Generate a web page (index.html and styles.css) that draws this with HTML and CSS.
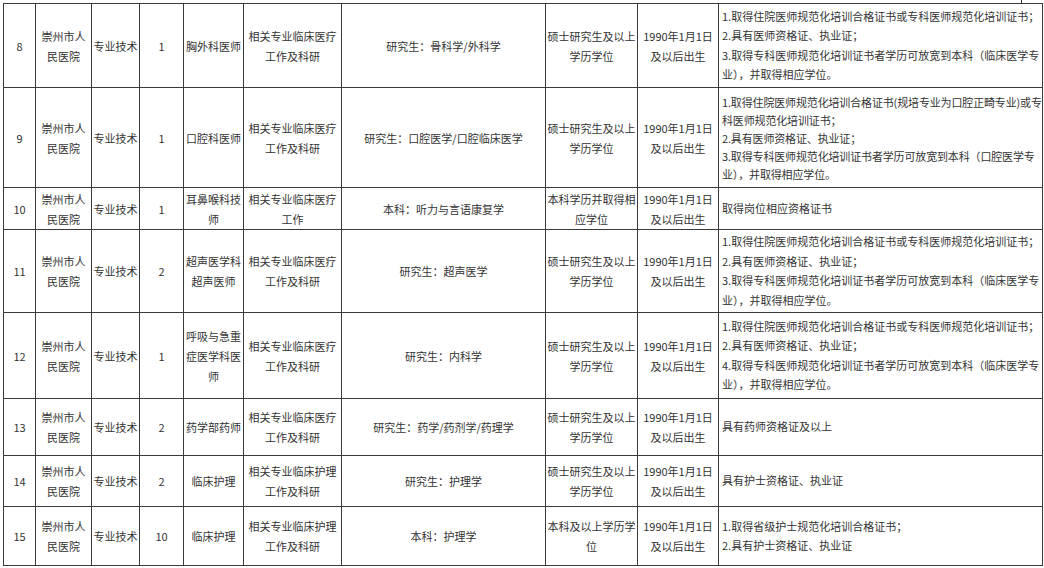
FILE: index.html
```html
<!DOCTYPE html>
<html lang="zh-CN">
<head>
<meta charset="utf-8">
<title>岗位表</title>
<link rel="stylesheet" href="styles.css">
</head>
<body>
<div class="sheet">
  <span class="tick"></span>
  <table class="jobs">
    <colgroup>
      <col class="c1"><col class="c2"><col class="c3"><col class="c4"><col class="c5">
      <col class="c6"><col class="c7"><col class="c8"><col class="c9"><col class="c10">
    </colgroup>
    <tbody>
      <tr class="r8">
        <td>8</td><td>崇州市人<br>民医院</td><td>专业技术</td><td>1</td><td>胸外科医师</td>
        <td>相关专业临床医疗<br>工作及科研</td><td>研究生：骨科学/外科学</td>
        <td>硕士研究生及以上<br>学历学位</td><td>1990年1月1日<br>及以后出生</td>
        <td class="req"><div>1.取得住院医师规范化培训合格证书或专科医师规范化培训证书；</div><div>2.具有医师资格证、执业证；</div><div>3.取得专科医师规范化培训证书者学历可放宽到本科（临床医学专</div><div>业），并取得相应学位。</div></td>
      </tr>
      <tr class="r9">
        <td>9</td><td>崇州市人<br>民医院</td><td>专业技术</td><td>1</td><td>口腔科医师</td>
        <td>相关专业临床医疗<br>工作及科研</td><td>研究生：口腔医学/口腔临床医学</td>
        <td>硕士研究生及以上<br>学历学位</td><td>1990年1月1日<br>及以后出生</td>
        <td class="req tight"><div>1.取得住院医师规范化培训合格证书(规培专业为口腔正畸专业)或专</div><div>科医师规范化培训证书；</div><div>2.具有医师资格证、执业证；</div><div>3.取得专科医师规范化培训证书者学历可放宽到本科（口腔医学专</div><div>业），并取得相应学位。</div></td>
      </tr>
      <tr class="r10">
        <td>10</td><td>崇州市人<br>民医院</td><td>专业技术</td><td>1</td><td>耳鼻喉科技<br>师</td>
        <td>相关专业临床医疗<br>工作</td><td>本科：听力与言语康复学</td>
        <td>本科学历并取得相<br>应学位</td><td>1990年1月1日<br>及以后出生</td>
        <td class="req"><div>取得岗位相应资格证书</div></td>
      </tr>
      <tr class="r11">
        <td>11</td><td>崇州市人<br>民医院</td><td>专业技术</td><td>2</td><td>超声医学科<br>超声医师</td>
        <td>相关专业临床医疗<br>工作及科研</td><td>研究生：超声医学</td>
        <td>硕士研究生及以上<br>学历学位</td><td>1990年1月1日<br>及以后出生</td>
        <td class="req"><div>1.取得住院医师规范化培训合格证书或专科医师规范化培训证书；</div><div>2.具有医师资格证、执业证；</div><div>3.取得专科医师规范化培训证书者学历可放宽到本科（临床医学专</div><div>业），并取得相应学位。</div></td>
      </tr>
      <tr class="r12">
        <td>12</td><td>崇州市人<br>民医院</td><td>专业技术</td><td>1</td><td>呼吸与急重<br>症医学科医<br>师</td>
        <td>相关专业临床医疗<br>工作及科研</td><td>研究生：内科学</td>
        <td>硕士研究生及以上<br>学历学位</td><td>1990年1月1日<br>及以后出生</td>
        <td class="req"><div>1.取得住院医师规范化培训合格证书或专科医师规范化培训证书；</div><div>2.具有医师资格证、执业证；</div><div>4.取得专科医师规范化培训证书者学历可放宽到本科（临床医学专</div><div>业），并取得相应学位。</div></td>
      </tr>
      <tr class="r13">
        <td>13</td><td>崇州市人<br>民医院</td><td>专业技术</td><td>2</td><td>药学部药师</td>
        <td>相关专业临床医疗<br>工作及科研</td><td>研究生：药学/药剂学/药理学</td>
        <td>硕士研究生及以上<br>学历学位</td><td>1990年1月1日<br>及以后出生</td>
        <td class="req"><div>具有药师资格证及以上</div></td>
      </tr>
      <tr class="r14">
        <td>14</td><td>崇州市人<br>民医院</td><td>专业技术</td><td>2</td><td>临床护理</td>
        <td>相关专业临床护理<br>工作及科研</td><td>研究生：护理学</td>
        <td>硕士研究生及以上<br>学历学位</td><td>1990年1月1日<br>及以后出生</td>
        <td class="req"><div>具有护士资格证、执业证</div></td>
      </tr>
      <tr class="r15">
        <td>15</td><td>崇州市人<br>民医院</td><td>专业技术</td><td>10</td><td>临床护理</td>
        <td>相关专业临床护理<br>工作及科研</td><td>本科：护理学</td>
        <td>本科及以上学历学<br>位</td><td>1990年1月1日<br>及以后出生</td>
        <td class="req"><div>1.取得省级护士规范化培训合格证书；</div><div>2.具有护士资格证、执业证</div></td>
      </tr>
    </tbody>
  </table>
</div>
</body>
</html>
```

FILE: styles.css
```css
html, body {
  margin: 0;
  padding: 0;
  background: #ffffff;
}

body {
  font-family: "Noto Sans CJK SC", "Noto Sans", sans-serif;
  font-size: 11px;
  color: #333333;
}

.sheet {
  position: relative;
  padding: 3px 0 0 3px;
  width: 1041px;
  height: 565px;
}

.tick {
  position: absolute;
  left: 1021px;
  top: 0;
  width: 1px;
  height: 3px;
  background: #333333;
}

.jobs {
  border-collapse: collapse;
  table-layout: fixed;
  width: 1039px;
}

.c1 { width: 32px; }
.c2 { width: 56px; }
.c3 { width: 48px; }
.c4 { width: 44px; }
.c5 { width: 60px; }
.c6 { width: 98px; }
.c7 { width: 204px; }
.c8 { width: 92px; }
.c9 { width: 81px; }
.c10 { width: 324px; }

.jobs td {
  border: 1px solid #3a3a3a;
  padding: 0;
  text-align: center;
  vertical-align: middle;
  line-height: 20px;
  white-space: nowrap;
  overflow: hidden;
}

.jobs td.req {
  text-align: left;
  padding-left: 3px;
  line-height: 19.5px;
}

.jobs td.req.tight {
  line-height: 18px;
}

.jobs td.req.tight div {
  letter-spacing: -0.15px;
}

.r8 { height: 84px; }
.r9 { height: 100px; }
.r10 { height: 42px; }
.r11 { height: 83px; }
.r12 { height: 86px; }
.r13 { height: 57px; }
.r14 { height: 51px; }
.r15 { height: 59px; }
```
